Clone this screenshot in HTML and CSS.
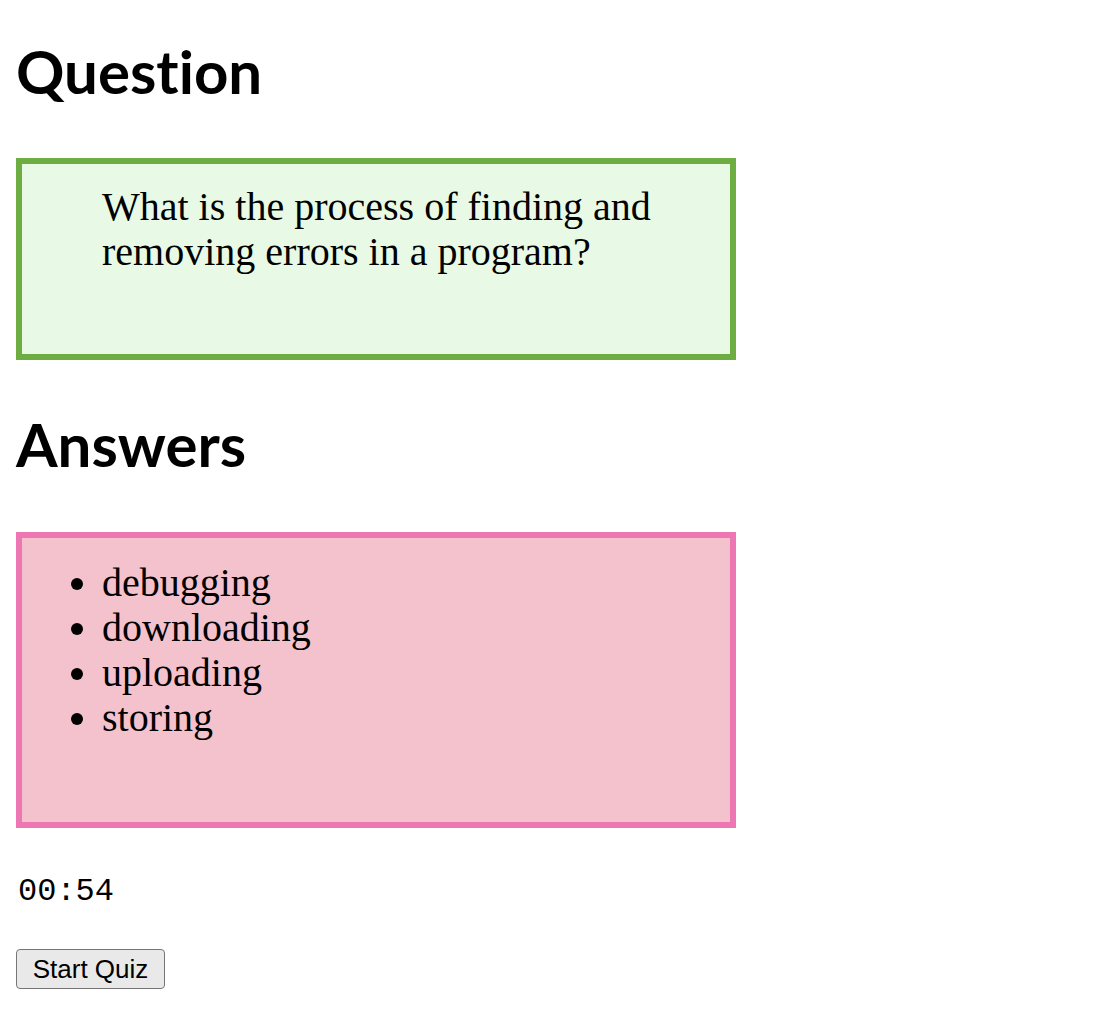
FILE: index.html
```html
<!DOCTYPE html>
<html>
<head>
<meta charset="utf-8">
<link rel="stylesheet" href="styles.css">
</head>
<body>
<h1 class="heading">Question</h1>
<div class="question-box">
  <p class="question-text">What is the process of finding and removing errors in a program?</p>
</div>
<h1 class="heading heading-answers">Answers</h1>
<div class="answer-box">
  <ul class="answer-list">
    <li>debugging</li>
    <li>downloading</li>
    <li>uploading</li>
    <li>storing</li>
  </ul>
</div>
<div class="timer">00:54</div>
<button class="start-btn">Start Quiz</button>
</body>
</html>
```
FILE: styles.css
```css
html, body {
  margin: 0;
  padding: 0;
  background: #ffffff;
}
body {
  padding: 0 16px;
  font-family: "Liberation Serif", serif;
  color: #000;
}
.heading {
  font-family: Lato, "Open Sans", sans-serif;
  font-weight: 700;
  font-size: 60px;
  line-height: 72px;
  margin: 35px 0 0 0;
  font-variant-ligatures: none;
  font-feature-settings: "liga" 0, "dlig" 0;
}
.heading-answers {
  margin-top: 48px;
}
.question-box {
  box-sizing: border-box;
  width: 720px;
  height: 202px;
  margin-top: 51px;
  border: 6px solid #6dad41;
  background: #e8f9e5;
  padding: 20px 0 0 80px;
}
.question-text {
  margin: 0;
  font-size: 40px;
  line-height: 45px;
}
.answer-box {
  box-sizing: border-box;
  width: 720px;
  height: 296px;
  margin-top: 52px;
  border: 6px solid #ed77b3;
  background: #f4c2cc;
  padding-top: 22px;
}
.answer-list {
  margin: 0;
  padding-left: 80px;
  font-size: 40px;
  line-height: 45px;
}
.timer {
  font-family: "Liberation Mono", monospace;
  font-size: 32px;
  line-height: 40px;
  margin-top: 44px;
  padding-left: 2px;
}
.start-btn {
  display: block;
  margin-top: 37px;
  font-family: "Liberation Sans", sans-serif;
  font-size: 26px;
  height: 40px;
  width: 149px;
  padding: 0;
  background: #e9e9e9;
  border: 1.5px solid #767676;
  border-radius: 4px;
  color: #000;
}
```
